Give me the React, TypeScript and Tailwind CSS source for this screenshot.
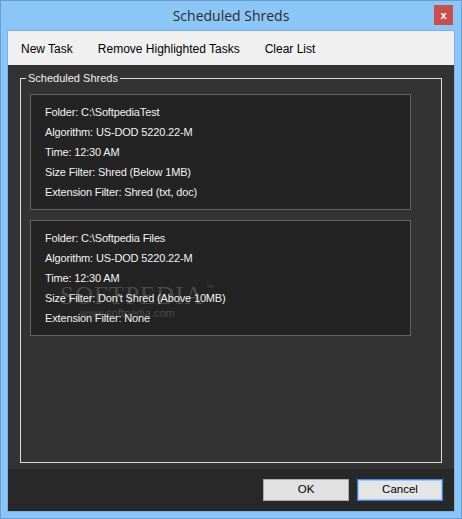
import React from "react";

const font = { fontFamily: '"Liberation Sans", Arial, sans-serif' };

function Card({ lines, watermark }: { lines: string[]; watermark?: boolean }) {
  return (
    <div className="relative mx-[9px] h-[116px] w-[381px] border border-[#646464] bg-[#232323] pl-[14px] pt-[7px]">
      {watermark && (
        <div className="pointer-events-none absolute left-[29px] top-[62px] select-none">
          <div className="flex items-start">
            <span
              className="text-[25px] leading-[26px] tracking-[1px] text-[#484848]"
              style={{ fontFamily: '"Liberation Serif", serif' }}
            >
              SOFTPEDIA
            </span>
            <span className="ml-[2px] text-[8px] leading-[10px] text-[#484848]">™</span>
          </div>
          <div className="ml-[20px] mt-[-2px] text-[11px] leading-[12px] text-[#4a4a4a]">www.softpedia.com</div>
        </div>
      )}
      <div className="relative flex flex-col">
        {lines.map((l, i) => (
          <div key={i} className="flex h-[20px] items-center text-[11px] tracking-[-0.15px] text-[#f2f2f2]">
            {l}
          </div>
        ))}
      </div>
    </div>
  );
}

export default function App() {
  return (
    <div
      className="flex h-[519px] w-[462px] flex-col border border-[#6a9ed2] bg-[#8cc6f6]"
      style={font}
    >
      <div className="relative flex h-[29px] shrink-0 items-center justify-center">
        <span className="text-[14px] text-[#2b2b2b]" style={{ fontFamily: '"Open Sans", "Liberation Sans", sans-serif' }}>
          Scheduled Shreds
        </span>
        <div className="absolute right-[8px] top-[4px] flex h-[20px] w-[19px] items-center justify-center bg-[#c75050] text-[11px] font-bold leading-none text-white">
          x
        </div>
      </div>
      <div className="mx-[6px] mb-[6px] flex flex-1 flex-col border border-[#79b1e4]">
        <div className="flex h-[34px] shrink-0 items-center gap-[25px] bg-[#f0f0f0] pl-[13px] pt-[1px] text-[12px] text-black">
          <span>New Task</span>
          <span>Remove Highlighted Tasks</span>
          <span>Clear List</span>
        </div>
        <div className="flex h-[404px] shrink-0 flex-col bg-[#333333] px-[12px] pt-[13px]">
          <div className="relative flex h-[385px] w-[422px] flex-col gap-[10px] border border-[#dedede] pt-[15px]">
            <div className="absolute left-[5px] top-[-8px] bg-[#333333] px-[2px] text-[11px] leading-[14px] text-[#f2f2f2]">
              Scheduled Shreds
            </div>
            <Card
              lines={[
                "Folder: C:\\SoftpediaTest",
                "Algorithm: US-DOD 5220.22-M",
                "Time: 12:30 AM",
                "Size Filter: Shred (Below 1MB)",
                "Extension Filter: Shred (txt, doc)",
              ]}
            />
            <Card
              watermark
              lines={[
                "Folder: C:\\Softpedia Files",
                "Algorithm: US-DOD 5220.22-M",
                "Time: 12:30 AM",
                "Size Filter: Don't Shred (Above 10MB)",
                "Extension Filter: None",
              ]}
            />
          </div>
        </div>
        <div className="flex flex-1 items-start justify-end gap-[8px] bg-[#282828] pr-[11px] pt-[10px]">
          <button className="flex h-[22px] w-[86px] items-center justify-center border border-[#adadad] bg-[#e1e1e1] text-[11.5px] text-black">
            OK
          </button>
          <button className="flex h-[22px] w-[86px] items-center justify-center border border-[#3c8ae6] bg-[#e5e5e5] text-[11.5px] text-black shadow-[inset_0_0_0_1px_#9cc8f4]">
            Cancel
          </button>
        </div>
      </div>
    </div>
  );
}
